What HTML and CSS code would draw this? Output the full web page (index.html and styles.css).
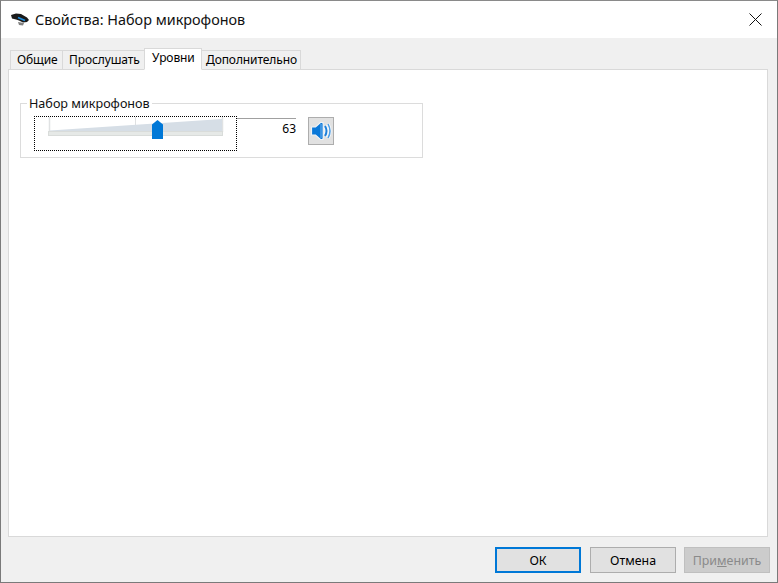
FILE: index.html
```html
<!DOCTYPE html>
<html lang="ru">
<head>
<meta charset="utf-8">
<title>Свойства: Набор микрофонов</title>
<link rel="stylesheet" href="styles.css">
</head>
<body>
<div class="window">
  <header class="titlebar">
    <svg class="app-icon" width="20" height="13" viewBox="0 0 20 13">
      <path d="M1 2 L6 0.500 L11 1 L17 4.500 L19 7 L17 9 L13 9.500 L9 7.500 L6 6.500 L2 5.500 Z" fill="#1a1a1a"/>
      <path d="M8 4.500 L15 7.500" stroke="#1f8fe0" stroke-width="1.800" fill="none"/>
      <path d="M8 9 L14 10 L13 12.500 L9 12 Z" fill="#808080"/>
    </svg>
    <span class="title">Свойства: Набор микрофонов</span>
    <svg class="close" width="13" height="13" viewBox="0 0 13 13">
      <path d="M0.500 0.500 L12.500 12.500 M12.500 0.500 L0.500 12.500" stroke="#111" stroke-width="1" fill="none"/>
    </svg>
  </header>
  <main class="body">
    <nav class="tabs">
      <span class="tab">Общие</span>
      <span class="tab">Прослушать</span>
      <span class="tab active">Уровни</span>
      <span class="tab">Дополнительно</span>
    </nav>
    <section class="panel">
      <div class="group">
        <span class="legend">Набор микрофонов</span>
        <div class="slider-focus">
          <svg width="177" height="27" viewBox="0 0 177 27">
            <path d="M1.500 0 V15 M174.500 0 V15" fill="none" stroke="#e0e2e3" stroke-width="1.500"/>
            <path d="M87.500 0 V15" stroke="#dfe1e2" stroke-width="1"/>
            <path d="M2 13.500 L174 2 V15 H2 Z" fill="#d6dee6"/>
            <rect x="0.500" y="14.500" width="174" height="4" fill="#e6e9e7" stroke="#d9dcda"/>
            <path d="M104 7.500 L109.500 3 L115 7.500 V22 H104 Z" fill="#0078d7"/>
          </svg>
        </div>
        <div class="value-box"><span class="value">63</span></div>
        <button class="mute" type="button">
          <svg width="22" height="22" viewBox="0 0 22 22">
            <path d="M1.500 7 H5.500 L10.500 2.500 H13 V19.500 H10.500 L5.500 15 H1.500 Z" fill="#0a78d8" stroke="#eef2f6" stroke-width="1.200"/>
            <path d="M10 4 H12.500 V18 H10 Z" fill="#3d95e3"/>
            <path d="M15 6 Q18 11 15 16" stroke="#f4f8fb" stroke-width="4.200" fill="none"/>
            <path d="M15 6 Q18 11 15 16" stroke="#1f80da" stroke-width="2" fill="none"/>
            <path d="M18 4 Q22 11 18 18" stroke="#f4f8fb" stroke-width="3.200" fill="none"/>
            <path d="M18 4 Q22 11 18 18" stroke="#4f9de4" stroke-width="1.500" fill="none"/>
          </svg>
        </button>
      </div>
    </section>
    <footer class="actions">
      <button class="btn default" type="button">ОК</button>
      <button class="btn" type="button">Отмена</button>
      <button class="btn disabled" type="button">При<u>м</u>енить</button>
    </footer>
  </main>
</div>
</body>
</html>
```
FILE: styles.css
```css
* { box-sizing: border-box; }
html, body { margin: 0; height: 100%; }
body { font-family: "Noto Sans", "Open Sans", sans-serif; font-size: 12px; color: #000; background: #fff; }
.window {
  width: 778px; height: 583px; display: flex; flex-direction: column;
  border: 1px solid #7a7a7a; border-top-color: #8a8a8a;
}
.titlebar { height: 37px; background: #fff; display: flex; align-items: center; padding: 0 15px 0 9px; flex: none; }
.app-icon { margin-right: 5px; }
.title { font-size: 14.4px; color: #111; flex: 1; line-height: 37px; }
.close { display: block; }
.body { flex: 1; display: flex; flex-direction: column; background: #f0f0f0; padding: 10px 8px 0 7px; min-height: 0; }
.tabs { display: flex; align-items: flex-end; height: 22px; padding-left: 2px; flex: none; position: relative; z-index: 1; margin-bottom: -1px; }
.tab {
  height: 20px; line-height: 17px; padding: 0 3px; background: #f0f0f0;
  border: 1px solid #d9d9d9; border-bottom: 1px solid #d9d9d9; margin-right: -1px; white-space: nowrap;
  font-size: 12px; letter-spacing: -0.1px;
}
.tab:nth-child(1) { width: 53px; padding-left: 6px; }
.tab:nth-child(2) { width: 83px; padding-left: 6px; }
.tab:nth-child(3) { width: 58px; height: 22px; background: #fff; border-bottom: 1px solid #fff; padding-left: 7px; position: relative; }
.tab:nth-child(4) { width: 100px; padding-left: 4px; }
.panel { flex: 1; background: #fff; border: 1px solid #d9d9d9; padding: 33px 0 0 11px; min-height: 0; margin-right: 1px; }
.group {
  position: relative; width: 403px; height: 55px; border: 1px solid #dcdcdc;
  display: flex; align-items: flex-start; padding: 12px 0 0 13px;
}
.legend { position: absolute; left: 6px; top: -8px; background: #fff; padding: 0 2px; line-height: 16px; font-size: 12.6px; color: #111; }
.slider-focus { width: 203px; height: 35px; border: 1px dotted #000; padding: 0 0 0 13px; flex: none; }
.slider-focus svg { display: block; }
.value-box { width: 59px; height: 22px; margin-top: 2px; border-top: 1px solid #a0a0a0; text-align: right; line-height: 20px; flex: none; }
.value { font-size: 12px; }
.mute {
  width: 26px; height: 28px; margin: 1px 0 0 12px; padding: 0; background: #e1e1e1;
  border: 1px solid #adadad; display: flex; align-items: center; justify-content: center; flex: none;
}
.actions { height: 45px; display: flex; justify-content: flex-end; align-items: flex-start; gap: 9px; padding-top: 10px; flex: none; margin-right: -1px; }
.btn {
  width: 86px; height: 26px; padding: 0; background: #e1e1e1; border: 1px solid #adadad;
  font: inherit; font-size: 12.4px; color: #000;
}
.btn.disabled { margin-left: -1px; background: #cccccc; border-color: #bfbfbf; color: #8a8a8a; }
.btn.default { border: 2px solid #0078d7; }
```
